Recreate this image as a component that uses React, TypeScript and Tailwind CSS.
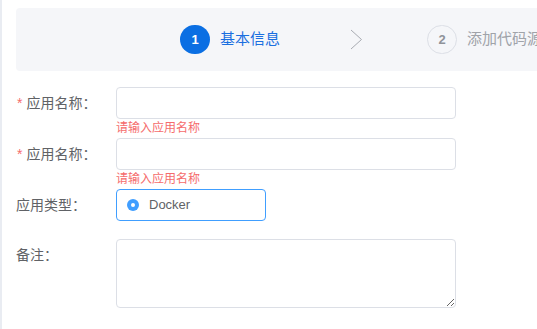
import React from "react";

const font = { fontFamily: '"Liberation Sans", "Noto Sans CJK SC", sans-serif' };

function Label({ text, required }: { text: string; required?: boolean }) {
    return (
        <div className="w-[100px] shrink-0 h-8 flex items-center text-sm text-[#606266]">
            {required && <span className="text-[#f56c6c] mr-1 ml-px">*</span>}
            {text}
        </div>
    );
}

export default function App() {
    return (
        <div className="w-[537px] h-[329px] overflow-hidden bg-white border-l-2 border-[#e9ecf2]" style={font}>
            <div className="pl-[14px] pt-2">
                {/* Steps */}
                <div className="h-[63px] -mr-8 bg-[#f5f6f9] rounded flex items-center pl-[164px] whitespace-nowrap">
                    <div className="flex items-center">
                        <div className="w-[30px] h-[29px] rounded-full bg-[#0b6fe3] text-white text-[13px] font-bold flex items-center justify-center">
                            1
                        </div>
                        <span className="ml-[10px] text-[15px] text-[#1a6fe0]">基本信息</span>
                    </div>
                    <svg className="ml-[70px]" width="13" height="21" viewBox="0 0 13 21">
                        <polyline points="1,1 11.5,10.5 1,20" fill="none" stroke="#a8abb2" strokeWidth="1" />
                    </svg>
                    <div className="flex items-center ml-[64px]">
                        <div className="w-[30px] h-[29px] rounded-full border border-[#dcdfe6] text-[#909399] text-[13px] font-bold flex items-center justify-center">
                            2
                        </div>
                        <span className="ml-[10px] text-[15px] text-[#a0a3a9]">添加代码源</span>
                    </div>
                </div>

                {/* Form */}
                <div className="mt-4">
                    <div className="flex">
                        <Label text="应用名称：" required />
                        <div>
                            <input className="w-[340px] h-8 border border-[#dcdfe6] rounded px-3 text-sm outline-none" />
                            <div className="h-[19px] leading-[19px] text-xs text-[#f56c6c]">请输入应用名称</div>
                        </div>
                    </div>
                    <div className="flex">
                        <Label text="应用名称：" required />
                        <div>
                            <input className="w-[340px] h-8 border border-[#dcdfe6] rounded px-3 text-sm outline-none" />
                            <div className="h-[19px] leading-[19px] text-xs text-[#f56c6c]">请输入应用名称</div>
                        </div>
                    </div>
                    <div className="flex">
                        <Label text="应用类型：" />
                        <div className="pb-[18px]">
                            <div className="w-[150px] h-8 border border-[#409eff] rounded flex items-center pl-[10px]">
                                <span className="w-3 h-3 rounded-full bg-[#409eff] flex items-center justify-center">
                                    <span className="w-1 h-1 rounded-full bg-white" />
                                </span>
                                <span className="ml-[10px] text-[13px] text-[#606266]">Docker</span>
                            </div>
                        </div>
                    </div>
                    <div className="flex">
                        <Label text="备注：" />
                        <textarea className="w-[340px] h-[69px] border border-[#dcdfe6] rounded px-3 py-1 text-sm outline-none" />
                    </div>
                </div>
            </div>
        </div>
    );
}
